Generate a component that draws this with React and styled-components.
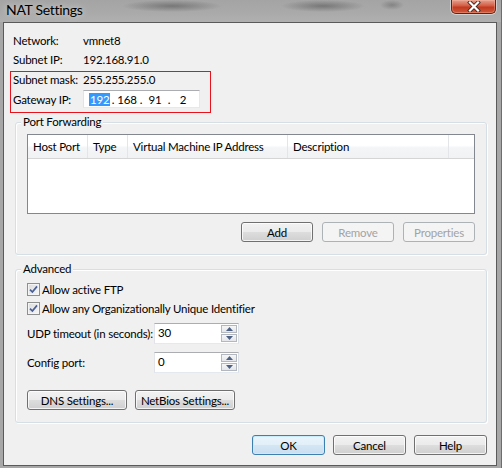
import React from "react";
import styled, { createGlobalStyle, css } from "styled-components";

const GlobalStyle = createGlobalStyle`
  html, body {
    margin: 0;
    padding: 0;
    background: #a9a9a9;
  }
  body {
    font-family: Lato, "Liberation Sans", sans-serif;
    font-size: 11.5px;
    letter-spacing: -0.2px;
    color: #000;
  }
`;

const Window = styled.div`
  width: 502px;
  height: 468px;
  display: flex;
  flex-direction: column;
  box-sizing: border-box;
  padding: 0 4px 2px 3px;
  background: #a7a7a7;
  border-right: 1px solid #6d6d6d;
  overflow: hidden;
`;

// aero glass: blurred stuff shining through behind the title
const TitleBar = styled.div`
  height: 22px;
  flex: none;
  display: flex;
  align-items: flex-start;
  justify-content: space-between;
  margin: 0 -4px 0 -3px;
  padding: 0 5px 0 6px;
  background:
    radial-gradient(ellipse 50px 6px at 172px 6px, rgba(80, 80, 80, 0.55), transparent),
    radial-gradient(ellipse 42px 6px at 323px 6px, rgba(80, 80, 80, 0.55), transparent),
    radial-gradient(ellipse 12px 5px at 392px 5px, rgba(80, 80, 80, 0.4), transparent),
    linear-gradient(#a4a4a4, #aaaaaa 60%, #b0b0b0);
`;

const Title = styled.span`
  font-size: 14px;
  letter-spacing: -0.3px;
  line-height: 19px;
  color: #000;
  text-shadow: 0 0 6px rgba(255, 255, 255, 0.7);
`;

const CloseButton = styled.div`
  width: 45px;
  height: 14px;
  display: flex;
  align-items: center;
  justify-content: center;
  box-sizing: border-box;
  border: 1px solid #5e2417;
  border-top: none;
  border-radius: 0 0 5px 5px;
  background: linear-gradient(#e3a190, #d45c43 45%, #c13a1f 55%, #cf5a3d);
  box-shadow: 0 0 0 1px rgba(255, 255, 255, 0.45), inset 0 0 0 1px rgba(255, 190, 170, 0.35);
`;

const Client = styled.div`
  flex: 1;
  display: flex;
  flex-direction: column;
  border: 1px solid #5a5a5a;
  background: #f0f0f0;
  padding: 0 9px 0 6px;
`;

const InfoList = styled.div`
  display: flex;
  flex-direction: column;
  padding-top: 8px;
`;

const InfoRow = styled.div`
  display: flex;
  align-items: center;
  height: ${(p) => p.$h || 19}px;
  padding-left: ${(p) => p.$pad ?? 3}px;
`;

const Label = styled.span`
  width: ${(p) => p.$w || 70}px;
  flex: none;
  white-space: nowrap;
`;

const Highlight = styled.div`
  display: flex;
  flex-direction: column;
  gap: 3px;
  width: 201px;
  margin-top: 2px;
  padding: 0 0 4px 1px;
  border: 1px solid #e8121c;
  box-sizing: border-box;
`;

const IpField = styled.div`
  width: 117px;
  height: 18px;
  box-sizing: border-box;
  display: flex;
  align-items: center;
  padding-left: 5px;
  background: #fff;
  border: 1px solid #abadb3;
  border-color: #abadb3 #e3e9ef #e3e9ef #e2e3ea;
`;

const IpPart = styled.span`
  width: 20px;
  text-align: center;
  line-height: 15px;
`;

const IpDot = styled.span`
  width: 8px;
  text-align: center;
  line-height: 15px;
`;

const Selected = styled.span`
  background: #3399ff;
  color: #fff;
  padding: 0 1px;
`;

const Group = styled.div`
  position: relative;
  margin: ${(p) => p.$top}px 0 0 5px;
  padding: ${(p) => p.$padTop || 11}px 11px 12px 11px;
  border: 1px solid #d5dfe5;
  border-radius: 3px;
  box-shadow: inset 1px 1px 0 #fff, 1px 1px 0 #fff;
  display: flex;
  flex-direction: column;
`;

const Legend = styled.span`
  position: absolute;
  top: -9px;
  left: 5px;
  padding: 0 2px;
  line-height: 16px;
  background: #f0f0f0;
`;

const ListView = styled.div`
  height: 80px;
  box-sizing: border-box;
  background: #fff;
  border: 1px solid #828790;
`;

const HeaderRow = styled.div`
  display: flex;
  height: 23px;
  border-bottom: 1px solid #d5d5d5;
  background: linear-gradient(#ffffff, #ffffff 45%, #f4f5f7 55%, #f1f2f4);
`;

const HeaderCell = styled.div`
  width: ${(p) => (p.$w ? `${p.$w}px` : "auto")};
  flex: ${(p) => (p.$w ? "none" : 1)};
  box-sizing: border-box;
  padding-left: 5px;
  line-height: 23px;
  border-right: 1px solid #e3e5e8;
  white-space: nowrap;
  &:last-child {
    border-right: none;
  }
`;

const ButtonRow = styled.div`
  display: flex;
  justify-content: ${(p) => (p.$left ? "flex-start" : "flex-end")};
  gap: ${(p) => p.$gap || 9}px;
  margin-top: ${(p) => p.$top}px;
`;

const Button = styled.button`
  width: ${(p) => p.$w || 72}px;
  height: 20px;
  padding: 0;
  font: inherit;
  letter-spacing: inherit;
  color: #000;
  white-space: nowrap;
  border: 1px solid #707070;
  border-radius: 3px;
  background: linear-gradient(#f2f2f2, #ebebeb 48%, #dddddd 52%, #cfcfcf);
  box-shadow: inset 0 0 0 1px rgba(255, 255, 255, 0.75);
  ${(p) =>
    p.disabled &&
    css`
      color: #a3a3a3;
      border-color: #adb2b5;
      background: #f4f4f4;
      box-shadow: none;
    `}
  ${(p) =>
    p.$default &&
    css`
      border-color: #3c7fb1;
      background: linear-gradient(#eaf4fb, #e2eff9 48%, #d3e6f5 52%, #c9def0);
      box-shadow: inset 0 0 0 1px #c9ecfd;
    `}
`;

const CheckRow = styled.label`
  display: flex;
  align-items: center;
  gap: 2px;
  height: 19px;
`;

const Box = styled.span`
  width: 13px;
  height: 13px;
  box-sizing: border-box;
  display: flex;
  align-items: center;
  justify-content: center;
  border: 1px solid #8e8f8f;
  background: linear-gradient(135deg, #dcdcdc, #f6f6f6);
  box-shadow: inset 0 0 0 1px #f4f4f4;
`;

const SpinRow = styled.div`
  display: flex;
  align-items: center;
  margin-top: ${(p) => p.$top}px;
`;

const SpinField = styled.div`
  width: 85px;
  height: 21px;
  box-sizing: border-box;
  display: flex;
  justify-content: space-between;
  padding: 1px 1px 1px 3px;
  background: #fff;
  border: 1px solid #abadb3;
  border-color: #abadb3 #dbdfe6 #e3e9ef #e2e3ea;
`;

const SpinValue = styled.span`
  line-height: 16px;
`;

const SpinButtons = styled.div`
  width: 16px;
  display: flex;
  flex-direction: column;
  gap: 1px;
`;

const SpinArrow = styled.div`
  flex: 1;
  display: flex;
  align-items: center;
  justify-content: center;
  border: 1px solid #b2b7c0;
  background: linear-gradient(#f6f6f6, #e4e6ea);
`;

function Check() {
  return (
    <Box>
      <svg width="9" height="9" viewBox="0 0 9 9">
        <path d="M1 4.6 L3.4 7 L8 1.4" fill="none" stroke="#4a5f97" strokeWidth="1.7" />
      </svg>
    </Box>
  );
}

function Spinner({ value }) {
  return (
    <SpinField>
      <SpinValue>{value}</SpinValue>
      <SpinButtons>
        <SpinArrow>
          <svg width="7" height="4" viewBox="0 0 7 4">
            <path d="M0 4 L3.5 0 L7 4 Z" fill="#4d6185" />
          </svg>
        </SpinArrow>
        <SpinArrow>
          <svg width="7" height="4" viewBox="0 0 7 4">
            <path d="M0 0 L7 0 L3.5 4 Z" fill="#4d6185" />
          </svg>
        </SpinArrow>
      </SpinButtons>
    </SpinField>
  );
}

const columns = [
  { name: "Host Port", w: 60 },
  { name: "Type", w: 40 },
  { name: "Virtual Machine IP Address", w: 160 },
  { name: "Description", w: 161 },
  { name: "" },
];

export default function App() {
  return (
    <>
      <GlobalStyle />
      <Window>
        <TitleBar>
          <Title>NAT Settings</Title>
          <CloseButton>
            <svg width="14" height="11" viewBox="0 0 14 11">
              <path d="M3 1.5 L11 9.5 M11 1.5 L3 9.5" stroke="#4a2a22" strokeWidth="4" strokeLinecap="square" />
              <path d="M3 1.5 L11 9.5 M11 1.5 L3 9.5" stroke="#fff" strokeWidth="2.2" strokeLinecap="square" />
            </svg>
          </CloseButton>
        </TitleBar>
        <Client>
          <InfoList>
            <InfoRow>
              <Label>Network:</Label>
              <span>vmnet8</span>
            </InfoRow>
            <InfoRow>
              <Label>Subnet IP:</Label>
              <span>192.168.91.0</span>
            </InfoRow>
            <Highlight>
              <InfoRow $h={15} $pad={1}>
                <Label>Subnet mask:</Label>
                <span>255.255.255.0</span>
              </InfoRow>
              <InfoRow $h={18} $pad={1}>
                <Label>Gateway IP:</Label>
                <IpField>
                  <IpPart>
                    <Selected>192</Selected>
                  </IpPart>
                  <IpDot>.</IpDot>
                  <IpPart>168</IpPart>
                  <IpDot>.</IpDot>
                  <IpPart>91</IpPart>
                  <IpDot>.</IpDot>
                  <IpPart>2</IpPart>
                </IpField>
              </InfoRow>
            </Highlight>
          </InfoList>

          <Group $top={9}>
            <Legend>Port Forwarding</Legend>
            <ListView>
              <HeaderRow>
                {columns.map((c, i) => (
                  <HeaderCell key={i} $w={c.w}>
                    {c.name}
                  </HeaderCell>
                ))}
              </HeaderRow>
            </ListView>
            <ButtonRow $top={8}>
              <Button>Add</Button>
              <Button disabled>Remove</Button>
              <Button disabled>Properties</Button>
            </ButtonRow>
          </Group>

          <Group $top={14} $padTop={10}>
            <Legend>Advanced</Legend>
            <CheckRow>
              <Check />
              <span>Allow active FTP</span>
            </CheckRow>
            <CheckRow>
              <Check />
              <span>Allow any Organizationally Unique Identifier</span>
            </CheckRow>
            <SpinRow $top={5}>
              <Label $w={127}>UDP timeout (in seconds):</Label>
              <Spinner value="30" />
            </SpinRow>
            <SpinRow $top={8}>
              <Label $w={127}>Config port:</Label>
              <Spinner value="0" />
            </SpinRow>
            <ButtonRow $left $gap={8} $top={17}>
              <Button $w={100}>DNS Settings...</Button>
              <Button $w={100}>NetBios Settings...</Button>
            </ButtonRow>
          </Group>

          <ButtonRow $gap={8} $top={12}>
            <Button $w={73} $default>
              OK
            </Button>
            <Button $w={73}>Cancel</Button>
            <Button $w={73}>Help</Button>
          </ButtonRow>
        </Client>
      </Window>
    </>
  );
}
